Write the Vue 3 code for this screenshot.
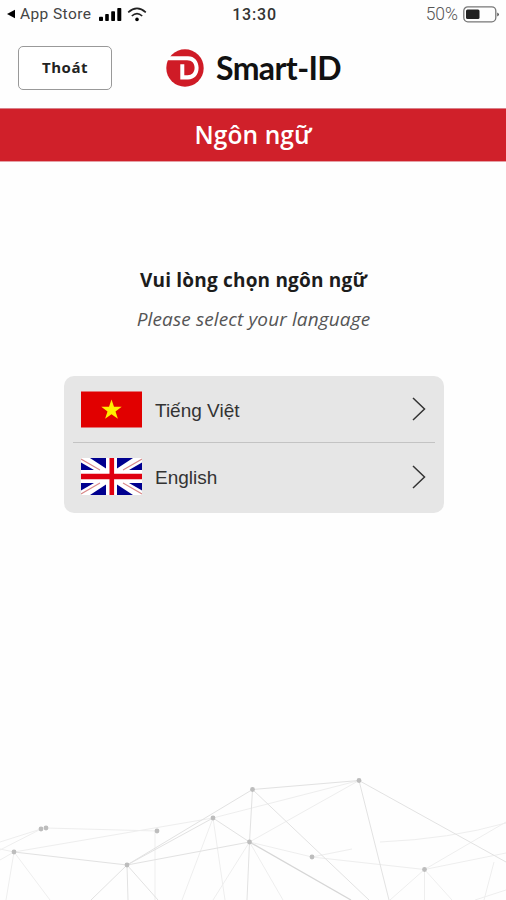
<template>
  <div class="screen">
    <div class="status-bar">
      <div class="status-left">
        <svg class="back" viewBox="0 0 8 10"><path d="M8 0.8v8.4L0 5z" /></svg>
        <span class="store">App Store</span>
        <svg class="signal" viewBox="0 0 23 13">
          <rect x="0" y="8.8" width="4" height="4.2" rx="0.8" />
          <rect x="6.2" y="6" width="3.6" height="7" rx="0.8" />
          <rect x="12.2" y="3.2" width="3.8" height="9.8" rx="0.8" />
          <rect x="18.3" y="0" width="4" height="13" rx="0.8" />
        </svg>
        <svg class="wifi" viewBox="0 0 20 15">
          <path d="M1.2 5.3Q10 -2.6 18.8 5.3" />
          <path d="M4.8 9Q10 4.2 15.2 9" />
          <circle cx="10" cy="12.4" r="1.8" />
        </svg>
      </div>
      <span class="clock">13:30</span>
      <div class="status-right">
        <span class="percent">50%</span>
        <svg class="battery" viewBox="0 0 37 17">
          <rect class="shell" x="0.8" y="0.8" width="32" height="15" rx="4" />
          <rect class="charge" x="3" y="3.4" width="13.5" height="9.6" rx="1.5" />
          <path d="M34.5 6.5q2.4 1.8 0 4z" />
        </svg>
      </div>
    </div>

    <header class="header">
      <button class="exit">Thoát</button>
      <div class="brand">
        <svg class="logo" viewBox="0 0 38 38">
          <circle cx="19" cy="19" r="18.7" fill="#cf1b26" />
          <path
            d="M2.5 7.2H22C28.5 7.2 32.6 12 32.6 18.8S28.5 30.5 22 30.5H14.3V15.2H18.3V26.2H21.5C26 26.2 28.6 23.3 28.6 18.8S26 11.2 21 11.2H0.8z"
            fill="#fff"
          />
        </svg>
        <span class="brand-name">Smart-ID</span>
      </div>
    </header>

    <div class="title-bar">Ngôn ngữ</div>

    <main class="content">
      <h1>Vui lòng chọn ngôn ngữ</h1>
      <p>Please select your language</p>

      <ul class="languages">
        <li v-for="lang in languages" :key="lang.code" @click="select(lang.code)">
          <svg v-if="lang.code === 'vi'" class="flag" viewBox="0 0 61 37">
            <rect y="0.5" width="61" height="36" fill="#e10000" />
            <path
              d="M30.5 8.5l2.5 7.3h7.7l-6.2 4.6 2.4 7.4-6.4-4.5-6.4 4.5 2.4-7.4-6.2-4.6H28z"
              fill="#ffee00"
            />
          </svg>
          <svg v-else class="flag" viewBox="0 0 61 37">
            <rect width="61" height="37" fill="#fff" />
            <path
              d="M9 0H25V10.5zM0 4.5V12H13zM36 0H52L36 10.5zM61 4.5V12H48zM0 25H13L0 32.5zM25 26.5V37H9zM36 26.5L52 37H36zM48 25H61V32.5z"
              fill="#00008f"
            />
            <path
              d="M0 1L19 12M61 1L42 12M0 36L19 25M61 36L42 25"
              fill="none"
              stroke="#d98a8a"
              stroke-width="1.1"
            />
            <path d="M28.5 0h4.6v37h-4.6zM0 15.8h61v5.4H0z" fill="#df0010" />
          </svg>
          <span class="lang-name">{{ lang.name }}</span>
          <svg class="chevron" viewBox="0 0 14 24">
            <path d="M1 1L12.5 12L1 23" />
          </svg>
        </li>
      </ul>
    </main>

    <!-- Network pattern at the bottom -->
    <svg class="network" viewBox="0 0 506 130">
      <path
        class="faint"
        d="M0 72L41 59M0 80L41 59M46 58L157 61M14 82L213 48M0 79L14 82M0 90L14 82M14 82L6 130M14 82L50 130M155 61V130M213 48L182 130M213 48L225 130M213 48L359 10.5M249.5 72L359 10.5M249.5 72L213 130M249.5 72L283 130M249.5 72L312 87M312 87L424.5 99.5M312 87L352 79M424.5 99.5L506 52M424.5 99.5L506 83M424.5 99.5L390 130M424.5 99.5V130M424.5 99.5L452 130M380 72Q450 69 506 53M506 120L475 130M494 92L484 130"
      />
      <path
        class="line"
        d="M14 82L127 95M127 95L91 130M127 95L128 130M127 95L158 130M127 95L213 48M127 95L252.5 19.5M127 95L249.5 72M213 48L249.5 72M252.5 19.5L249.5 72L247 130M252.5 19.5L359 10.5M252.5 19.5L369 130M359 10.5L389 130M359 10.5L506 92"
      />
      <path class="strong" d="M249.5 72L351 130" />
      <circle v-for="(node, i) in nodes" :key="i" :cx="node[0]" :cy="node[1]" r="2.4" />
    </svg>
  </div>
</template>

<script setup>
import { ref } from "vue";

const selected = ref("");

const languages = [
  { code: "vi", name: "Tiếng Việt" },
  { code: "en", name: "English" },
];

const nodes = [
  [14, 82],
  [41, 59],
  [46, 58],
  [157, 61],
  [127, 95],
  [213, 48],
  [252.5, 19.5],
  [249.5, 72],
  [359, 10.5],
  [312, 87],
  [424.5, 99.5],
];

const select = (code) => {
  selected.value = code;
};
</script>

<style>
body {
  margin: 0;
  background: #fefefe;
}
</style>

<style scoped>
.screen {
  height: 900px;
  display: flex;
  flex-direction: column;
  overflow: hidden;
  background: #fefefe;
  font-family: "Open Sans", sans-serif;
  color: #1c1c1c;
}

.status-bar {
  height: 28px;
  display: grid;
  grid-template-columns: 1fr auto 1fr;
  align-items: center;
  padding: 0 6px 0 7px;
  font-family: Roboto, sans-serif;
}

.status-left,
.status-right {
  display: flex;
  align-items: center;
}
.status-right {
  justify-content: flex-end;
}

.back {
  width: 8px;
  height: 10px;
}
.store {
  margin-left: 5px;
  font-family: Roboto, sans-serif;
  font-size: 15.5px;
  letter-spacing: 0.4px;
  color: #444;
}
.signal {
  width: 23px;
  height: 13px;
  margin-left: 8px;
}
.wifi {
  width: 20px;
  height: 15px;
  margin-left: 5px;
}
.wifi path {
  fill: none;
  stroke: #222;
  stroke-width: 1.6;
}
.clock {
  padding-left: 2px;
  font-size: 16px;
  font-weight: 500;
  letter-spacing: 0.8px;
  color: #333;
}
.percent {
  font-size: 17.5px;
  font-weight: 300;
  color: #555;
}
.battery {
  width: 37px;
  height: 17px;
  margin-left: 5px;
}
.battery .shell {
  fill: none;
  stroke: #777;
  stroke-width: 1.3;
}
.battery .charge {
  fill: #222;
}

.header {
  height: 80px;
  display: flex;
  align-items: center;
  padding-left: 18px;
}
.exit {
  box-sizing: border-box;
  width: 94px;
  height: 44px;
  padding: 0 0 2px;
  border: 1.5px solid #999;
  border-radius: 5px;
  background: #fff;
  font-family: "Open Sans", sans-serif;
  font-size: 15px;
  font-weight: 700;
  letter-spacing: 0.5px;
  color: #222;
}
.brand {
  display: flex;
  align-items: center;
  margin-left: 54px;
}
.logo {
  width: 38px;
  height: 38px;
}
.brand-name {
  margin-left: 12px;
  font-family: Lato, sans-serif;
  font-size: 32px;
  font-weight: 700;
  letter-spacing: -0.6px;
  line-height: 38px;
  color: #111;
}

.title-bar {
  box-sizing: border-box;
  height: 54px;
  border-top: 1px solid #d9808a;
  border-bottom: 1px solid #e5a0a6;
  background: #d0202a;
  color: #fff;
  font-size: 24.5px;
  font-weight: 600;
  letter-spacing: 0.1px;
  line-height: 52px;
  text-align: center;
}

.content {
  flex: 1;
  padding: 104px 62px 0 64px;
  text-align: center;
}
.content h1 {
  margin: 0 1px 0 0;
  font-size: 19px;
  font-weight: 700;
  letter-spacing: 0.2px;
  line-height: 28px;
}
.content p {
  margin: 11px 1px 0 0;
  font-size: 19px;
  font-style: italic;
  letter-spacing: 0.12px;
  line-height: 28px;
  color: #555;
}

.languages {
  margin: 43px 0 0;
  padding: 0 9px 3px;
  border-radius: 10px;
  background: #e6e6e6;
  list-style: none;
}
.languages li {
  box-sizing: border-box;
  height: 67px;
  display: flex;
  align-items: center;
  padding: 0 9px 0 7.5px;
  cursor: pointer;
}
.languages li:first-child {
  border-bottom: 1px solid #c3c3c3;
}
.flag {
  width: 61px;
  height: 37px;
}
.lang-name {
  flex: 1;
  margin-left: 13.5px;
  padding-top: 3px;
  font-family: "Liberation Sans", sans-serif;
  font-size: 19px;
  line-height: 22px;
  text-align: left;
  color: #333;
}
.chevron {
  width: 14px;
  height: 24px;
}
.chevron path {
  fill: none;
  stroke: #333;
  stroke-width: 1.5;
}

.network {
  display: block;
  width: 506px;
  height: 130px;
}
.network path {
  fill: none;
  stroke-width: 1;
}
.network .faint {
  stroke: #eeeeee;
}
.network .line {
  stroke: #e2e2e2;
}
.network .strong {
  stroke: #d6d6d6;
  stroke-width: 1.3;
}
.network circle {
  fill: #bdbdbd;
}
</style>
